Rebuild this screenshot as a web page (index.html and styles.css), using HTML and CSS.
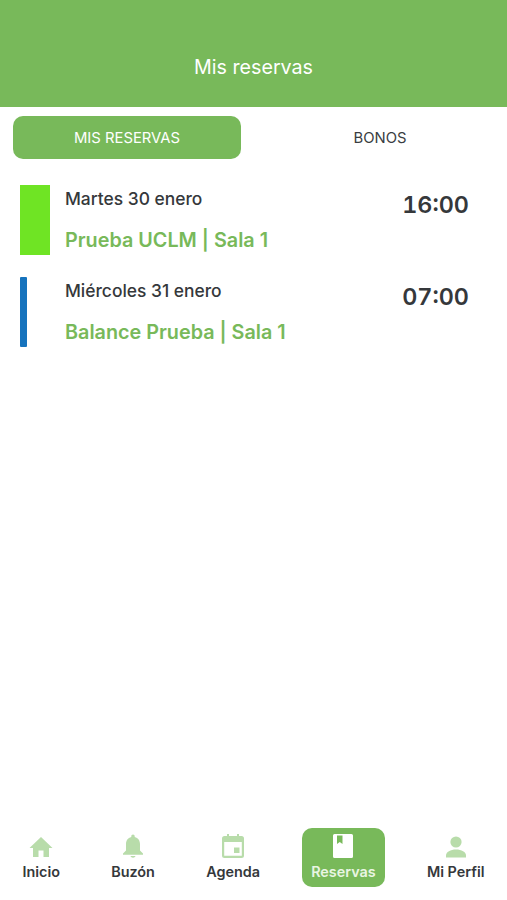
FILE: index.html
```html
<!DOCTYPE html>
<html lang="es">
<head>
<meta charset="utf-8">
<title>Mis reservas</title>
<link rel="stylesheet" href="styles.css">
</head>
<body>
<div class="app">
  <header class="header"><h1 class="title">Mis reservas</h1></header>
  <div class="tabs">
    <div class="tab tab-active">MIS RESERVAS</div>
    <div class="tab">BONOS</div>
  </div>
  <main class="list">
    <article class="row">
      <div class="bar bar-wide"></div>
      <div class="info">
        <div class="date">Martes 30 enero</div>
        <div class="name">Prueba UCLM | Sala 1</div>
      </div>
      <div class="time">16:00</div>
    </article>
    <article class="row">
      <div class="bar bar-thin"></div>
      <div class="info">
        <div class="date">Miércoles 31 enero</div>
        <div class="name">Balance Prueba | Sala 1</div>
      </div>
      <div class="time">07:00</div>
    </article>
  </main>
  <nav class="nav">
    <div class="nav-item">
      <svg class="icon" viewBox="0 0 24 24"><path d="M12 3 0.5 14H4v9h5.5v-6.5h5V23H20v-9h3.5z"/></svg>
      <span class="nav-label">Inicio</span>
    </div>
    <div class="nav-item">
      <svg class="icon" viewBox="0 0 24 24"><path d="M12 0.500c-1 0-1.700.8-1.700 1.800v.6C6.800 3.700 5 6.600 5 10v6.500L2 19.500v1.300h20v-1.300L19 16.500V10c0-3.400-1.800-6.300-5.300-7.100v-.6c0-1-.7-1.800-1.700-1.800z"/><path d="M9.500 22h5c-.3 1-1.300 1.700-2.500 1.700S9.800 23 9.500 22z"/></svg>
      <span class="nav-label">Buzón</span>
    </div>
    <div class="nav-item">
      <svg class="icon" viewBox="0 0 24 24"><path fill-rule="evenodd" d="M6 0h2v2h8V0h2v2h2.500A2.500 2.500 0 0 1 23 4.500V21.500A2.500 2.500 0 0 1 20.500 24h-17A2.500 2.500 0 0 1 1 21.500V4.500A2.500 2.500 0 0 1 3.500 2H6zM3.200 8v13.800h17.600V8z"/><path d="M13 13.500h5.500V19H13z"/></svg>
      <span class="nav-label">Agenda</span>
    </div>
    <div class="nav-item nav-item-active">
      <svg class="icon" viewBox="0 0 24 24"><path fill-rule="evenodd" d="M3.500 0h17A1.500 1.500 0 0 1 22 1.500v21a1.500 1.500 0 0 1-1.500 1.500h-17A1.500 1.500 0 0 1 2 22.500V1.500A1.500 1.500 0 0 1 3.500 0zM6 1.500V10l2.750-2 2.750 2V1.500z"/></svg>
      <span class="nav-label">Reservas</span>
    </div>
    <div class="nav-item">
      <svg class="icon" viewBox="0 0 24 24"><circle cx="12" cy="8" r="5.600"/><path d="M2 23.500v-2C2 18 6.500 15.500 12 15.500S22 18 22 21.500v2z"/></svg>
      <span class="nav-label">Mi Perfil</span>
    </div>
  </nav>
</div>
</body>
</html>
```

FILE: styles.css
```css
* { box-sizing: border-box; }
html, body { margin: 0; padding: 0; background: #fff; }
body { font-family: Inter, "Liberation Sans", sans-serif; color: #333639; }
.app { height: 900px; display: flex; flex-direction: column; overflow: hidden; }

.header {
  height: 107px;
  background: #78b95a;
  display: flex;
  align-items: flex-end;
  justify-content: center;
  padding-bottom: 27px;
}
.title { margin: 0; font-size: 19.7px; line-height: 26px; font-weight: 400; color: #fff; }

.tabs { display: flex; padding: 9px 0 0 13px; gap: 12px; }
.tab {
  flex: 1;
  height: 43px;
  border-radius: 10px;
  display: flex;
  align-items: center;
  justify-content: center;
  font-size: 14.8px;
  color: #3a3d42;
}
.tab-active { flex: 0 0 228px; background: #78b95a; color: #fff; }

.list { flex: 1; padding: 26px 38px 0 20px; display: flex; flex-direction: column; gap: 22px; }
.row { display: flex; height: 70px; }
.bar { height: 70px; }
.bar-wide { width: 30px; background: #6fe424; margin-right: 15px; }
.bar-thin { width: 7px; background: #1673bd; margin-right: 38px; border-radius: 1px; }
.info { flex: 1; display: flex; flex-direction: column; }
.date { font-size: 17.4px; line-height: 20px; margin-top: 4px; font-weight: 500; color: #35383b; }
.name { font-size: 19.8px; line-height: 26px; margin-top: 18px; font-weight: 600; color: #78b95a; }
.time { font-size: 23.4px; line-height: 30px; margin-top: 5px; font-weight: 600; color: #35383b; font-variant-numeric: tabular-nums; }

.nav {
  display: flex;
  justify-content: space-between;
  padding: 0 13px;
  margin-bottom: 13px;
}
.nav-item {
  display: flex;
  flex-direction: column;
  align-items: center;
  padding: 6px 9.5px 0;
  height: 59px;
  border-radius: 10px;
  color: #35383b;
}
.icon { width: 24px; height: 24px; fill: #b8dcaa; display: block; }
.nav-label { font-size: 14.4px; line-height: 20px; margin-top: 4px; font-weight: 600; white-space: nowrap; }
.nav-item-active { background: #78b95a; color: #e9f5e3; }
.nav-item-active .icon { fill: #fff; }
```
